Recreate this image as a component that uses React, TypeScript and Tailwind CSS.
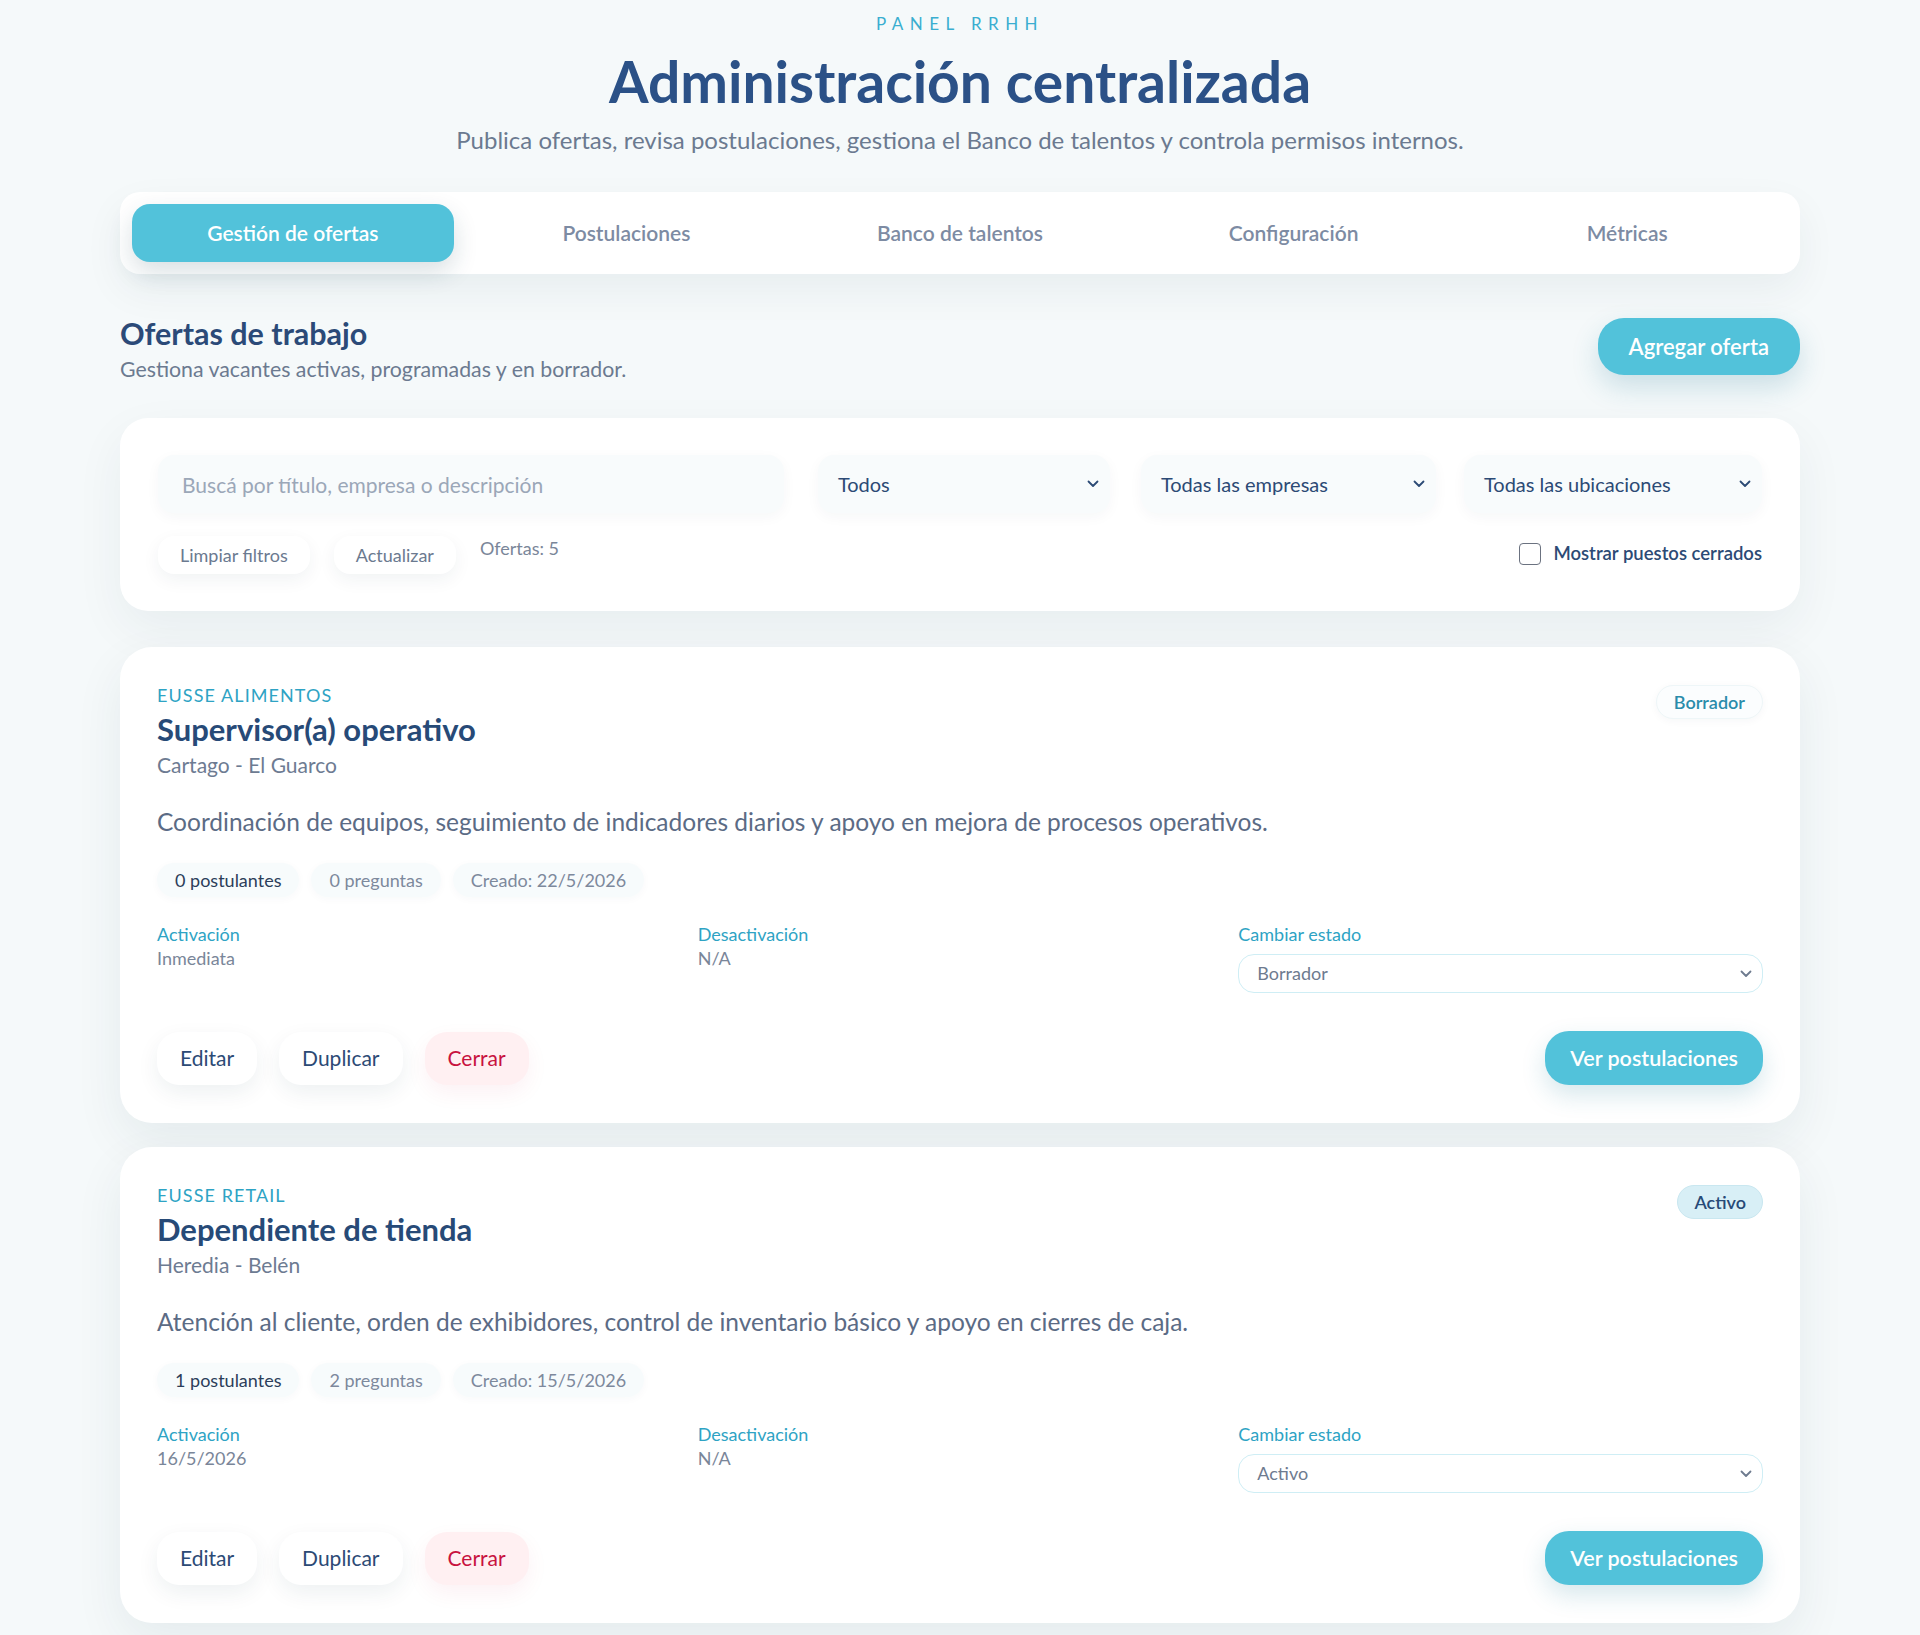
import { useState } from "react";

const tabs = ["Gestión de ofertas", "Postulaciones", "Banco de talentos", "Configuración", "Métricas"];

type Offer = {
  company: string;
  title: string;
  location: string;
  description: string;
  applicants: string;
  questions: string;
  created: string;
  activation: string;
  deactivation: string;
  status: "Borrador" | "Activo";
};

const offers: Offer[] = [
  {
    company: "Eusse Alimentos",
    title: "Supervisor(a) operativo",
    location: "Cartago - El Guarco",
    description:
      "Coordinación de equipos, seguimiento de indicadores diarios y apoyo en mejora de procesos operativos.",
    applicants: "0 postulantes",
    questions: "0 preguntas",
    created: "Creado: 22/5/2026",
    activation: "Inmediata",
    deactivation: "N/A",
    status: "Borrador",
  },
  {
    company: "Eusse Retail",
    title: "Dependiente de tienda",
    location: "Heredia - Belén",
    description:
      "Atención al cliente, orden de exhibidores, control de inventario básico y apoyo en cierres de caja.",
    applicants: "1 postulantes",
    questions: "2 preguntas",
    created: "Creado: 15/5/2026",
    activation: "16/5/2026",
    deactivation: "N/A",
    status: "Activo",
  },
];

function Chevron({ className = "" }: { className?: string }) {
  return (
    <svg viewBox="0 0 12 8" fill="none" className={className}>
      <path d="M1.5 1.5L6 6l4.5-4.5" stroke="currentColor" strokeWidth="1.8" strokeLinecap="round" strokeLinejoin="round" />
    </svg>
  );
}

function FilterSelect({ label }: { label: string }) {
  return (
    <div className="flex h-[58px] items-center justify-between rounded-2xl bg-[#f8fbfc] pl-5 pr-[11px] text-[20px] text-[#2c4a75] shadow-[0_4px_14px_rgba(20,60,80,0.04)]">
      <span>{label}</span>
      <Chevron className="h-[8px] w-[12px] text-[#2c4a75]" />
    </div>
  );
}

function Chip({ children, dark = false }: { children: React.ReactNode; dark?: boolean }) {
  return (
    <span
      className={`flex h-[34px] items-center rounded-full bg-[#f7fbfc] px-[18px] text-[18px] shadow-[0_2px_8px_rgba(20,60,80,0.03)] ${
        dark ? "text-[#2c3e5a]" : "text-[#7d899c]"
      }`}
    >
      {children}
    </span>
  );
}

function OfferCard({ offer }: { offer: Offer }) {
  return (
    <article className="rounded-[32px] bg-white px-[37px] pt-[36px] pb-[38px] shadow-[0_18px_50px_rgba(20,50,70,0.07)]">
      <div className="flex items-start justify-between">
        <div>
          <p className="text-[18px] leading-6 uppercase tracking-[0.06em] text-[#2ea3c4]">{offer.company}</p>
          <h3 className="mt-[4px] text-[31px] leading-9 font-bold text-[#274a77]">{offer.title}</h3>
          <p className="mt-[4px] text-[21px] leading-7 text-[#6d7b92]">{offer.location}</p>
        </div>
        {offer.status === "Borrador" ? (
          <span className="mt-[2px] flex h-[34px] items-center rounded-full border border-[#eef6f8] bg-[#fbfdfe] px-[17px] text-[18px] font-semibold text-[#2a8cab] shadow-[0_2px_8px_rgba(20,60,80,0.04)]">
            Borrador
          </span>
        ) : (
          <span className="mt-[2px] flex h-[34px] items-center rounded-full border border-[#c9e7f0] bg-[#d8eff6] px-[16px] text-[18px] font-semibold text-[#274a77]">
            Activo
          </span>
        )}
      </div>

      <p className="mt-[27px] text-[24.5px] leading-8 text-[#5b6b85]">{offer.description}</p>

      <div className="mt-[25px] flex gap-3">
        <Chip dark>{offer.applicants}</Chip>
        <Chip>{offer.questions}</Chip>
        <Chip>{offer.created}</Chip>
      </div>

      <div className="mt-[25px] grid grid-cols-3 gap-4">
        <div>
          <p className="text-[18px] leading-6 text-[#2ea3c4]">Activación</p>
          <p className="text-[18px] leading-6 text-[#7a8699]">{offer.activation}</p>
        </div>
        <div>
          <p className="text-[18px] leading-6 text-[#2ea3c4]">Desactivación</p>
          <p className="text-[18px] leading-6 text-[#7a8699]">{offer.deactivation}</p>
        </div>
        <div>
          <p className="text-[18px] leading-6 text-[#2ea3c4]">Cambiar estado</p>
          <div className="mt-[8px] flex h-[39px] items-center justify-between rounded-2xl border border-[#cfeef5] bg-white pl-[18px] pr-[10px] text-[18px] text-[#6e7b8f]">
            <span>{offer.status}</span>
            <Chevron className="h-[8px] w-[12px] text-[#6e7b8f]" />
          </div>
        </div>
      </div>

      <div className="mt-[38px] flex items-center justify-between">
        <div className="flex gap-[22px]">
          <button className="h-[53px] rounded-[22px] bg-white px-[23px] text-[21px] text-[#2c4a75] shadow-[0_8px_22px_rgba(20,50,70,0.07)]">
            Editar
          </button>
          <button className="h-[53px] rounded-[22px] bg-white px-[23px] text-[21px] text-[#2c4a75] shadow-[0_8px_22px_rgba(20,50,70,0.07)]">
            Duplicar
          </button>
          <button className="h-[53px] rounded-[22px] bg-[#fff0f2] px-[23px] text-[21px] text-[#c8123f] shadow-[0_8px_22px_rgba(200,20,60,0.06)]">
            Cerrar
          </button>
        </div>
        <button className="h-[54px] rounded-[24px] bg-[#52c2da] px-[25px] text-[21.5px] font-semibold text-white shadow-[0_10px_24px_rgba(30,120,150,0.18)]">
          Ver postulaciones
        </button>
      </div>
    </article>
  );
}

export default function App() {
  const [active, setActive] = useState(0);
  const [showClosed, setShowClosed] = useState(false);

  return (
    <div className="min-h-screen bg-[#f5f9fa] pb-[13px] font-['Lato','Noto_Sans',sans-serif]">
      <div className="mx-auto max-w-[1680px]">
        {/* Heading */}
        <header className="pt-3 text-center">
          <p className="text-[17px] leading-6 tracking-[0.38em] text-[#3aaed0]">PANEL RRHH</p>
          <h1 className="mt-[14px] text-[57px] leading-[62px] font-bold text-[#2b5187]">Administración centralizada</h1>
          <p className="mt-[12px] text-[24px] leading-8 text-[#6b7a90]">
            Publica ofertas, revisa postulaciones, gestiona el Banco de talentos y controla permisos internos.
          </p>
        </header>

        {/* Tabs */}
        <nav className="mt-[36px] grid grid-cols-5 gap-3 rounded-[20px] bg-white p-3 shadow-[0_16px_40px_rgba(20,50,70,0.06)]">
          {tabs.map((tab, i) => (
            <button
              key={tab}
              onClick={() => setActive(i)}
              className={
                i === active
                  ? "h-[58px] rounded-[18px] bg-[#52c2da] text-[21px] font-semibold text-white shadow-[0_10px_24px_rgba(20,60,80,0.16)]"
                  : "h-[58px] rounded-[18px] text-[21px] font-semibold text-[#7d8ba3]"
              }
            >
              {tab}
            </button>
          ))}
        </nav>

        {/* Section header */}
        <div className="mt-[44px] flex items-start justify-between">
          <div>
            <h2 className="text-[30.5px] leading-[30px] font-bold text-[#2b4a78]">Ofertas de trabajo</h2>
            <p className="mt-[7px] text-[21.3px] leading-7 text-[#6b7a90]">Gestiona vacantes activas, programadas y en borrador.</p>
          </div>
          <button className="h-[57px] rounded-[26px] bg-[#52c2da] px-[31px] text-[22px] font-semibold text-white shadow-[0_12px_28px_rgba(30,120,150,0.2)]">
            Agregar oferta
          </button>
        </div>

        {/* Filters */}
        <section className="mt-[35px] rounded-[28px] bg-white px-[38px] pt-[37px] pb-[37px] shadow-[0_18px_50px_rgba(20,50,70,0.06)]">
          <div className="grid grid-cols-[minmax(0,2.1fr)_1fr_1fr_1fr] gap-7">
            <input
              placeholder="Buscá por título, empresa o descripción"
              className="h-[58px] rounded-2xl bg-[#f8fbfc] px-6 text-[21px] text-[#2c4a75] outline-none shadow-[0_4px_14px_rgba(20,60,80,0.04)] placeholder:text-[#9ba7b8]"
            />
            <div className="ml-[6px]">
              <FilterSelect label="Todos" />
            </div>
            <div className="ml-[3px]">
              <FilterSelect label="Todas las empresas" />
            </div>
            <FilterSelect label="Todas las ubicaciones" />
          </div>
          <div className="mt-[23px] flex items-start justify-between">
            <div className="flex items-start gap-[24px]">
              <button className="h-[38px] rounded-2xl bg-white px-[22px] text-[18px] text-[#6b7a90] shadow-[0_6px_18px_rgba(20,50,70,0.06)]">
                Limpiar filtros
              </button>
              <button className="h-[38px] rounded-2xl bg-white px-[22px] text-[18px] text-[#6b7a90] shadow-[0_6px_18px_rgba(20,50,70,0.06)]">
                Actualizar
              </button>
              <span className="text-[18px] leading-6 text-[#7a8699]">Ofertas: 5</span>
            </div>
            <label className="mt-[4px] flex items-center gap-[12px] text-[18.5px] font-semibold text-[#2c4a75]">
              <span
                onClick={() => setShowClosed(!showClosed)}
                className="h-[22px] w-[22px] rounded-[4px] border-[1.5px] border-[#6b7280] bg-white"
              />
              Mostrar puestos cerrados
            </label>
          </div>
        </section>

        {/* Offers */}
        <div className="mt-[36px] flex flex-col gap-6">
          {offers.map((offer) => (
            <OfferCard key={offer.title} offer={offer} />
          ))}
        </div>
      </div>
    </div>
  );
}
